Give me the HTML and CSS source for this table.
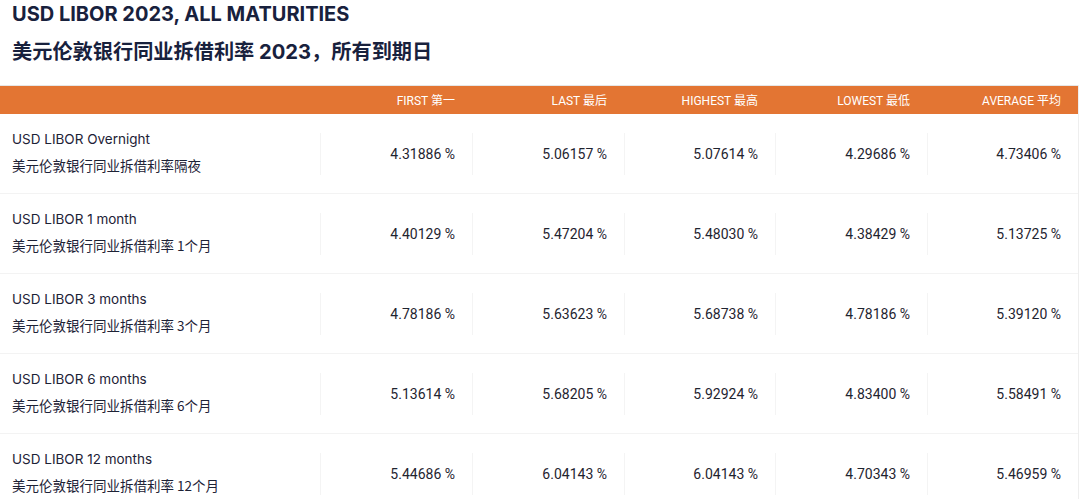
FILE: index.html
```html
<!DOCTYPE html>
<html lang="zh">
<head>
<meta charset="utf-8">
<title>USD LIBOR 2023</title>
<link rel="stylesheet" href="styles.css">
</head>
<body>
<header class="titles">
  <h1 class="title">USD LIBOR 2023, ALL MATURITIES</h1>
  <h2 class="title title-cn">美元伦敦银行同业拆借利率 2023，所有到期日</h2>
</header>
<div class="table">
  <div class="row head">
    <div class="cell label"></div>
    <div class="cell hcell">FIRST 第一</div>
    <div class="cell hcell">LAST 最后</div>
    <div class="cell hcell">HIGHEST 最高</div>
    <div class="cell hcell">LOWEST 最低</div>
    <div class="cell hcell">AVERAGE 平均</div>
  </div>
  <div class="row">
    <div class="cell label"><span class="en">USD LIBOR Overnight</span><span class="cn">美元伦敦银行同业拆借利率隔夜</span></div>
    <div class="cell val">4.31886 %</div>
    <div class="cell val">5.06157 %</div>
    <div class="cell val">5.07614 %</div>
    <div class="cell val">4.29686 %</div>
    <div class="cell val">4.73406 %</div>
  </div>
  <div class="row">
    <div class="cell label"><span class="en">USD LIBOR 1 month</span><span class="cn">美元伦敦银行同业拆借利率 1个月</span></div>
    <div class="cell val">4.40129 %</div>
    <div class="cell val">5.47204 %</div>
    <div class="cell val">5.48030 %</div>
    <div class="cell val">4.38429 %</div>
    <div class="cell val">5.13725 %</div>
  </div>
  <div class="row">
    <div class="cell label"><span class="en">USD LIBOR 3 months</span><span class="cn">美元伦敦银行同业拆借利率 3个月</span></div>
    <div class="cell val">4.78186 %</div>
    <div class="cell val">5.63623 %</div>
    <div class="cell val">5.68738 %</div>
    <div class="cell val">4.78186 %</div>
    <div class="cell val">5.39120 %</div>
  </div>
  <div class="row">
    <div class="cell label"><span class="en">USD LIBOR 6 months</span><span class="cn">美元伦敦银行同业拆借利率 6个月</span></div>
    <div class="cell val">5.13614 %</div>
    <div class="cell val">5.68205 %</div>
    <div class="cell val">5.92924 %</div>
    <div class="cell val">4.83400 %</div>
    <div class="cell val">5.58491 %</div>
  </div>
  <div class="row">
    <div class="cell label"><span class="en">USD LIBOR 12 months</span><span class="cn">美元伦敦银行同业拆借利率 12个月</span></div>
    <div class="cell val">5.44686 %</div>
    <div class="cell val">6.04143 %</div>
    <div class="cell val">6.04143 %</div>
    <div class="cell val">4.70343 %</div>
    <div class="cell val">5.46959 %</div>
  </div>
</div>
</body>
</html>
```

FILE: styles.css
```css
html, body {
  margin: 0;
  padding: 0;
  background: #ffffff;
}
body {
  font-family: Inter, "Noto Sans CJK SC", sans-serif;
  color: #1d2236;
  width: 1080px;
  overflow: hidden;
}
.titles {
  padding: 0 0 17px 12px;
}
.title {
  margin: 0;
  font-size: 20px;
  font-weight: 700;
  line-height: 28px;
  color: #18213d;
}
.title-cn {
  margin-top: 8px;
  line-height: 32px;
  font-size: 20.2px;
}
.table {
  width: 1078px;
  border-right: 1px solid #eeeeee;
}
.row {
  display: grid;
  grid-template-columns: 320px 152px 152px 151px 152px 151px;
  height: 80px;
  align-items: center;
  border-bottom: 1px solid #f3f3f3;
  box-sizing: border-box;
}
.row.head {
  height: 29px;
  background: #e37533;
  border-top: 1px solid #e6e6e6;
  border-bottom: none;
  padding-bottom: 1px;
}
.hcell {
  font-family: Roboto, "Noto Sans CJK SC", sans-serif;
  font-size: 12px;
  color: #ffffff;
  text-align: right;
  padding-right: 17px;
}
.label {
  display: flex;
  flex-direction: column;
  padding-left: 12px;
  margin-top: -4px;
}
.en {
  font-size: 13.5px;
  line-height: 26px;
}
.cn {
  font-family: "Noto Sans CJK SC", sans-serif;
  font-size: 13.5px;
  line-height: 26px;
}
.val {
  height: 42px;
  display: flex;
  align-items: center;
  justify-content: flex-end;
  padding-right: 17px;
  padding-top: 1px;
  box-sizing: border-box;
  border-left: 1px solid #f4f4f4;
  font-family: Roboto, sans-serif;
  font-size: 14px;
  color: #1f2430;
}
```
